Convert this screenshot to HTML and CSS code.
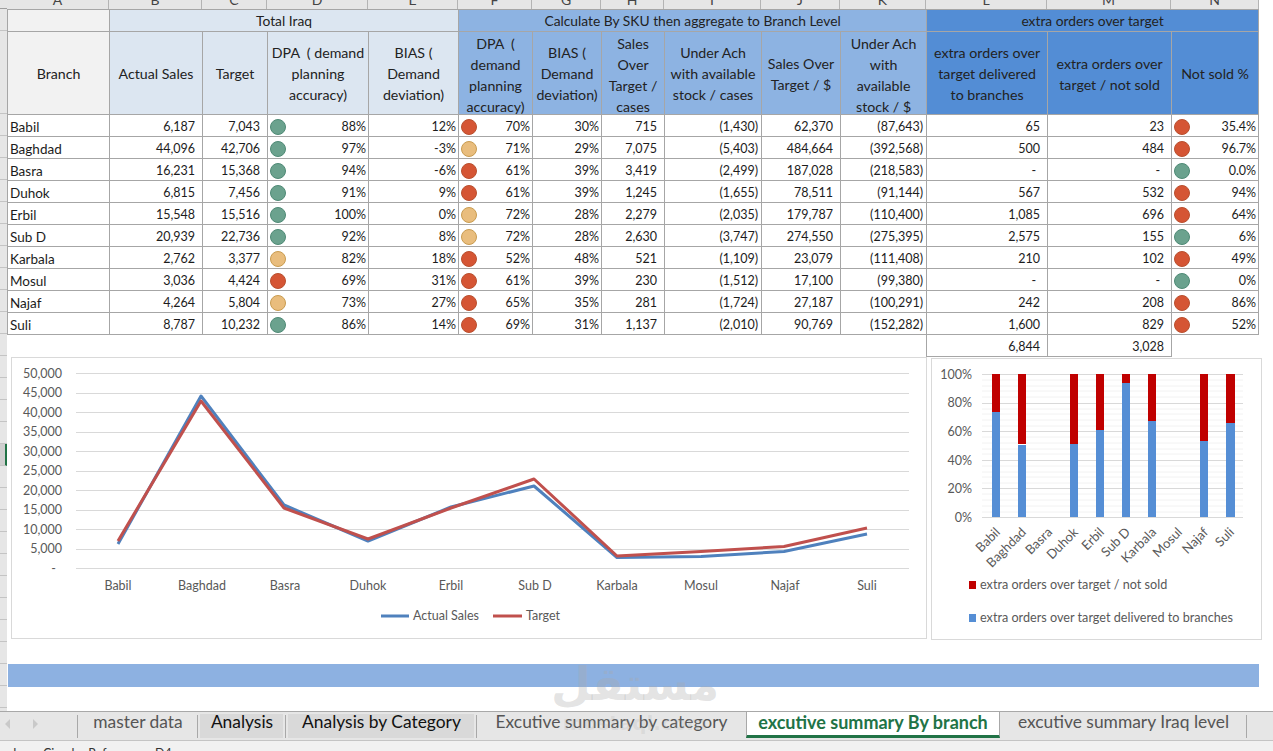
FILE: index.html
```html
<!DOCTYPE html>
<html lang="en">
<head>
<meta charset="utf-8">
<title>excutive summary By branch</title>
<link rel="stylesheet" href="styles.css">
</head>
<body>
<div class="app">
  <div class="sheet">
    <div class="rows">
      <div class="rh rh-top"></div>
      <div class="rh rh-group"></div>
      <div class="rh rh-head"></div>
      <div class="rh-ticks rh-ticks-a"></div>
      <div class="rh rh-sel"></div>
      <div class="rh-ticks rh-ticks-b"></div>
    </div>
    <div class="grid">
      <div class="colhead">
        <span>A</span><span>B</span><span>C</span><span>D</span><span>E</span><span>F</span><span>G</span><span>H</span><span>I</span><span>J</span><span>K</span><span>L</span><span>M</span><span>N</span>
      </div>
      <table class="data">
        <colgroup>
          <col class="c-a"><col class="c-b"><col class="c-c"><col class="c-d"><col class="c-e"><col class="c-f"><col class="c-g"><col class="c-h"><col class="c-i"><col class="c-j"><col class="c-k"><col class="c-l"><col class="c-m"><col class="c-n">
        </colgroup>
        <thead>
          <tr class="group">
            <th class="grey"></th>
            <th class="pale" colspan="4">Total Iraq</th>
            <th class="mid" colspan="6">Calculate By SKU then aggregate to Branch Level</th>
            <th class="deep" colspan="3">extra orders over target</th>
          </tr>
          <tr class="head">
            <th class="grey">Branch</th>
            <th class="pale">Actual Sales</th>
            <th class="pale">Target</th>
            <th class="pale">DPA &nbsp;( demand<br>planning<br>accuracy)</th>
            <th class="pale">BIAS (<br>Demand<br>deviation)</th>
            <th class="mid"><div class="tall">DPA &nbsp;(<br>demand<br>planning<br>accuracy)</div></th>
            <th class="mid">BIAS (<br>Demand<br>deviation)</th>
            <th class="mid"><div class="tall">Sales<br>Over<br>Target /<br>cases</div></th>
            <th class="mid">Under Ach<br>with available<br>stock / cases</th>
            <th class="mid">Sales Over<br>Target / $</th>
            <th class="mid"><div class="tall">Under Ach<br>with<br>available<br>stock / $</div></th>
            <th class="deep">extra orders over<br>target delivered<br>to branches</th>
            <th class="deep">extra orders over<br>target / not sold</th>
            <th class="deep">Not sold %</th>
          </tr>
        </thead>
        <tbody>
          <tr><td class="name">Babil</td><td class="acc">6,187</td><td class="acc">7,043</td><td class="pct"><i class="dot g"></i>88%</td><td class="pct">12%</td><td class="pct"><i class="dot r"></i>70%</td><td class="pct">30%</td><td class="acc">715</td><td class="neg">(1,430)</td><td class="acc">62,370</td><td class="neg">(87,643)</td><td class="acc">65</td><td class="acc">23</td><td class="pct"><i class="dot r"></i>35.4%</td></tr>
          <tr><td class="name">Baghdad</td><td class="acc">44,096</td><td class="acc">42,706</td><td class="pct"><i class="dot g"></i>97%</td><td class="pct">-3%</td><td class="pct"><i class="dot y"></i>71%</td><td class="pct">29%</td><td class="acc">7,075</td><td class="neg">(5,403)</td><td class="acc">484,664</td><td class="neg">(392,568)</td><td class="acc">500</td><td class="acc">484</td><td class="pct"><i class="dot r"></i>96.7%</td></tr>
          <tr><td class="name">Basra</td><td class="acc">16,231</td><td class="acc">15,368</td><td class="pct"><i class="dot g"></i>94%</td><td class="pct">-6%</td><td class="pct"><i class="dot r"></i>61%</td><td class="pct">39%</td><td class="acc">3,419</td><td class="neg">(2,499)</td><td class="acc">187,028</td><td class="neg">(218,583)</td><td class="dash">-</td><td class="dash">-</td><td class="pct"><i class="dot g"></i>0.0%</td></tr>
          <tr><td class="name">Duhok</td><td class="acc">6,815</td><td class="acc">7,456</td><td class="pct"><i class="dot g"></i>91%</td><td class="pct">9%</td><td class="pct"><i class="dot r"></i>61%</td><td class="pct">39%</td><td class="acc">1,245</td><td class="neg">(1,655)</td><td class="acc">78,511</td><td class="neg">(91,144)</td><td class="acc">567</td><td class="acc">532</td><td class="pct"><i class="dot r"></i>94%</td></tr>
          <tr><td class="name">Erbil</td><td class="acc">15,548</td><td class="acc">15,516</td><td class="pct"><i class="dot g"></i>100%</td><td class="pct">0%</td><td class="pct"><i class="dot y"></i>72%</td><td class="pct">28%</td><td class="acc">2,279</td><td class="neg">(2,035)</td><td class="acc">179,787</td><td class="neg">(110,400)</td><td class="acc">1,085</td><td class="acc">696</td><td class="pct"><i class="dot r"></i>64%</td></tr>
          <tr><td class="name">Sub D</td><td class="acc">20,939</td><td class="acc">22,736</td><td class="pct"><i class="dot g"></i>92%</td><td class="pct">8%</td><td class="pct"><i class="dot y"></i>72%</td><td class="pct">28%</td><td class="acc">2,630</td><td class="neg">(3,747)</td><td class="acc">274,550</td><td class="neg">(275,395)</td><td class="acc">2,575</td><td class="acc">155</td><td class="pct"><i class="dot g"></i>6%</td></tr>
          <tr><td class="name">Karbala</td><td class="acc">2,762</td><td class="acc">3,377</td><td class="pct"><i class="dot y"></i>82%</td><td class="pct">18%</td><td class="pct"><i class="dot r"></i>52%</td><td class="pct">48%</td><td class="acc">521</td><td class="neg">(1,109)</td><td class="acc">23,079</td><td class="neg">(111,408)</td><td class="acc">210</td><td class="acc">102</td><td class="pct"><i class="dot r"></i>49%</td></tr>
          <tr><td class="name">Mosul</td><td class="acc">3,036</td><td class="acc">4,424</td><td class="pct"><i class="dot r"></i>69%</td><td class="pct">31%</td><td class="pct"><i class="dot r"></i>61%</td><td class="pct">39%</td><td class="acc">230</td><td class="neg">(1,512)</td><td class="acc">17,100</td><td class="neg">(99,380)</td><td class="dash">-</td><td class="dash">-</td><td class="pct"><i class="dot g"></i>0%</td></tr>
          <tr><td class="name">Najaf</td><td class="acc">4,264</td><td class="acc">5,804</td><td class="pct"><i class="dot y"></i>73%</td><td class="pct">27%</td><td class="pct"><i class="dot r"></i>65%</td><td class="pct">35%</td><td class="acc">281</td><td class="neg">(1,724)</td><td class="acc">27,187</td><td class="neg">(100,291)</td><td class="acc">242</td><td class="acc">208</td><td class="pct"><i class="dot r"></i>86%</td></tr>
          <tr><td class="name">Suli</td><td class="acc">8,787</td><td class="acc">10,232</td><td class="pct"><i class="dot g"></i>86%</td><td class="pct">14%</td><td class="pct"><i class="dot r"></i>69%</td><td class="pct">31%</td><td class="acc">1,137</td><td class="neg">(2,010)</td><td class="acc">90,769</td><td class="neg">(152,282)</td><td class="acc">1,600</td><td class="acc">829</td><td class="pct"><i class="dot r"></i>52%</td></tr>
          <tr class="totals"><td colspan="11" class="blank"></td><td class="acc">6,844</td><td class="acc">3,028</td><td class="blank"></td></tr>
        </tbody>
      </table>
      <div class="charts">
        <div class="card card-line">
          <svg class="chart" width="914" height="280" viewBox="12 358 914 280">
            <g class="grid-major">
              <line x1="76" x2="909" y1="373.5" y2="373.5"/><line x1="76" x2="909" y1="393.5" y2="393.5"/><line x1="76" x2="909" y1="412.5" y2="412.5"/><line x1="76" x2="909" y1="432.5" y2="432.5"/><line x1="76" x2="909" y1="451.5" y2="451.5"/><line x1="76" x2="909" y1="471.5" y2="471.5"/><line x1="76" x2="909" y1="490.5" y2="490.5"/><line x1="76" x2="909" y1="510.5" y2="510.5"/><line x1="76" x2="909" y1="529.5" y2="529.5"/><line x1="76" x2="909" y1="549.5" y2="549.5"/><line x1="76" x2="909" y1="568.5" y2="568.5"/>
            </g>
            <g class="tick-y">
              <text x="62" y="378">50,000</text><text x="62" y="397">45,000</text><text x="62" y="417">40,000</text><text x="62" y="436">35,000</text><text x="62" y="456">30,000</text><text x="62" y="475">25,000</text><text x="62" y="495">20,000</text><text x="62" y="514">15,000</text><text x="62" y="534">10,000</text><text x="62" y="553">5,000</text><text x="56" y="573">-</text>
            </g>
            <g class="tick-x">
              <text x="118" y="590">Babil</text><text x="202" y="590">Baghdad</text><text x="285" y="590">Basra</text><text x="368" y="590">Duhok</text><text x="451" y="590">Erbil</text><text x="535" y="590">Sub D</text><text x="617" y="590">Karbala</text><text x="701" y="590">Mosul</text><text x="785" y="590">Najaf</text><text x="867" y="590">Suli</text>
            </g>
            <polyline class="line line-actual" points="118,544 201,396 284,505 368,541 451,507 534,486 617,557.5 701,556.5 784,551.5 867,534"/>
            <polyline class="line line-target" points="118,541 201,401 284,508 368,539 451,508 534,479 617,556 701,551.5 784,546.5 867,528"/>
            <line class="line line-actual" x1="381" x2="409" y1="616" y2="616"/>
            <line class="line line-target" x1="493" x2="522" y1="616" y2="616"/>
            <text class="legend" x="413" y="620">Actual Sales</text>
            <text class="legend" x="526" y="620">Target</text>
          </svg>
        </div>
        <div class="card card-bars">
          <svg class="chart" width="329" height="280" viewBox="932 359 329 280">
            <g class="grid-minor">
              <line x1="982" x2="1243" y1="380" y2="380"/><line x1="982" x2="1243" y1="386" y2="386"/><line x1="982" x2="1243" y1="391" y2="391"/><line x1="982" x2="1243" y1="397" y2="397"/>
              <line x1="982" x2="1243" y1="409" y2="409"/><line x1="982" x2="1243" y1="414" y2="414"/><line x1="982" x2="1243" y1="420" y2="420"/><line x1="982" x2="1243" y1="426" y2="426"/>
              <line x1="982" x2="1243" y1="437" y2="437"/><line x1="982" x2="1243" y1="443" y2="443"/><line x1="982" x2="1243" y1="449" y2="449"/><line x1="982" x2="1243" y1="454" y2="454"/>
              <line x1="982" x2="1243" y1="466" y2="466"/><line x1="982" x2="1243" y1="472" y2="472"/><line x1="982" x2="1243" y1="477" y2="477"/><line x1="982" x2="1243" y1="483" y2="483"/>
              <line x1="982" x2="1243" y1="494" y2="494"/><line x1="982" x2="1243" y1="500" y2="500"/><line x1="982" x2="1243" y1="506" y2="506"/><line x1="982" x2="1243" y1="512" y2="512"/>
            </g>
            <g class="grid-major">
              <line x1="982" x2="1243" y1="374.5" y2="374.5"/><line x1="982" x2="1243" y1="403.5" y2="403.5"/><line x1="982" x2="1243" y1="431.5" y2="431.5"/><line x1="982" x2="1243" y1="460.5" y2="460.5"/><line x1="982" x2="1243" y1="488.5" y2="488.5"/><line x1="982" x2="1243" y1="517.5" y2="517.5"/>
            </g>
            <g class="bar-red">
              <rect x="992" y="374" width="8" height="38"/><rect x="1018" y="374" width="8" height="70"/><rect x="1070" y="374" width="8" height="70"/><rect x="1096" y="374" width="8" height="56"/><rect x="1122" y="374" width="8" height="9"/><rect x="1148" y="374" width="8" height="47"/><rect x="1200" y="374" width="8" height="67"/><rect x="1226" y="374" width="9" height="49"/>
            </g>
            <g class="bar-blue">
              <rect x="992" y="412" width="8" height="105"/><rect x="1018" y="445" width="8" height="72"/><rect x="1070" y="444" width="8" height="73"/><rect x="1096" y="430" width="8" height="87"/><rect x="1122" y="383" width="8" height="134"/><rect x="1148" y="421" width="8" height="96"/><rect x="1200" y="441" width="8" height="76"/><rect x="1226" y="423" width="9" height="94"/>
            </g>
            <g class="tick-y">
              <text x="972" y="379">100%</text><text x="972" y="407">80%</text><text x="972" y="436">60%</text><text x="972" y="465">40%</text><text x="972" y="493">20%</text><text x="972" y="522">0%</text>
            </g>
            <g class="tick-rot">
              <text transform="translate(1001 533) rotate(-45)">Babil</text>
              <text transform="translate(1027 533) rotate(-45)">Baghdad</text>
              <text transform="translate(1053 533) rotate(-45)">Basra</text>
              <text transform="translate(1079 533) rotate(-45)">Duhok</text>
              <text transform="translate(1105 533) rotate(-45)">Erbil</text>
              <text transform="translate(1131 533) rotate(-45)">Sub D</text>
              <text transform="translate(1157 533) rotate(-45)">Karbala</text>
              <text transform="translate(1183 533) rotate(-45)">Mosul</text>
              <text transform="translate(1209 533) rotate(-45)">Najaf</text>
              <text transform="translate(1235 533) rotate(-45)">Suli</text>
            </g>
            <rect class="swatch-red" x="969" y="581" width="7" height="8"/>
            <text class="legend legend-bars" x="980" y="589">extra orders over target / not sold</text>
            <rect class="swatch-blue" x="969" y="614" width="7" height="8"/>
            <text class="legend legend-bars" x="980" y="622">extra orders over target delivered to branches</text>
          </svg>
        </div>
      </div>
      <div class="band"></div>
    </div>
  </div>
  <div class="tabs">
    <div class="arrows"><i class="arrow arrow-left"></i><i class="arrow arrow-right"></i></div>
    <div class="tab tab-1">master data</div>
    <div class="tab tab-2 shaded">Analysis</div>
    <div class="tab tab-3 shaded">Analysis by Category</div>
    <div class="tab tab-4 nosep">Excutive summary by category</div>
    <div class="tab tab-5 active">excutive summary By branch</div>
    <div class="tab tab-6">excutive summary Iraq level</div>
  </div>
  <div class="status"><span class="status-a">Ready</span><span class="status-b">Circular References: D4</span></div>
  <div class="watermark"><span class="wm-ar" lang="ar" dir="rtl">مستقل</span><span class="wm-en">mostaql.com</span></div>
</div>
</body>
</html>
```
FILE: styles.css
```css
* { box-sizing: border-box; }
html, body { margin: 0; padding: 0; background: #fff; }
body { font-family: Lato, "Liberation Sans", sans-serif; color: #1c1c1c; }

.app { position: relative; width: 1273px; height: 751px; overflow: hidden; display: flex; flex-direction: column; }
.sheet { display: flex; height: 711px; overflow: hidden; }

/* row header strip */
.rows { width: 7px; flex: none; display: flex; flex-direction: column; background: #e6e6e6; }
.rh { flex: none; border-bottom: 1px solid #c4c4c4; }
.rh-top { height: 9px; border-bottom-color: #9f9f9f; }
.rh-group { height: 22px; }
.rh-head { height: 83px; }
.rh-sel { height: 22px; background: #cfcfcf; border-right: 2px solid #217346; }
.rh-ticks { flex: none; background: repeating-linear-gradient(to bottom, #e6e6e6 0, #e6e6e6 21px, #c4c4c4 21px, #c4c4c4 22px); }
.rh-ticks-a { height: 330px; }
.rh-ticks-b { flex: 1; }

/* spreadsheet */
.grid { flex: 1; min-width: 0; display: flex; flex-direction: column; }
.colhead { height: 9px; width: 1252px; overflow: hidden; display: grid; flex: none;
  grid-template-columns: 102px 93px 65px 101px 90px 74px 69px 63px 97px 79px 86px 121px 124px 88px; }
.colhead span { height: 9px; background: #e6e6e6; border-right: 1px solid #b4b4b4; text-align: center; font-size: 14px; line-height: 0; color: #444; padding-top: 0; }

.data { table-layout: fixed; border-collapse: collapse; width: 1252px; flex: none; font-size: 12.5px; }
.c-a { width: 102px; } .c-b { width: 93px; } .c-c { width: 65px; } .c-d { width: 101px; } .c-e { width: 90px; }
.c-f { width: 74px; } .c-g { width: 69px; } .c-h { width: 63px; } .c-i { width: 97px; } .c-j { width: 79px; }
.c-k { width: 86px; } .c-l { width: 121px; } .c-m { width: 124px; } .c-n { width: 87px; }
.data th, .data td { border: 1px solid #a6a6a6; padding: 0; overflow: hidden; white-space: nowrap; }
.data th { font-weight: 400; text-align: center; line-height: 21px; color: #222; font-size: 14.2px; }
.group th { height: 22px; font-size: 13.8px; }
.head th { height: 83px; padding-top: 1px; }
.head th:has(.tall) { padding-top: 0; }
.tall { height: 82px; padding-top: 1px; }
.data td { height: 22px; line-height: 18px; padding-top: 3px; text-align: right; vertical-align: top; }
.grey { background: #f2f2f2; }
.pale { background: #dce6f1; }
.mid { background: #8db3e2; }
.deep { background: #538dd5; }
.data .name { text-align: left; padding-left: 2px; font-size: 13.5px; }
.data .acc { padding-right: 7px; }
.data .neg { padding-right: 3px; }
.data .pct { padding-right: 2px; }
.data .dash { padding-right: 11px; }
.data .blank { border: 0; }

.dot { float: left; width: 16px; height: 16px; margin: 1px 0 0 2px; border-radius: 50%; border: 1px solid; }
.g { background: #6ba28e; border-color: #4f8a76; }
.r { background: #d55534; border-color: #b9502f; }
.y { background: #e9bd7d; border-color: #c99c50; }

/* charts */
.charts { display: flex; gap: 4px; margin: 0 0 0 4px; align-items: flex-start; }
.card { border: 1px solid #d9d9d9; background: #fff; flex: none; }
.card-line { width: 916px; height: 282px; }
.card-bars { width: 331px; height: 282px; margin-top: 1px; }
.chart { display: block; font-family: Lato, "Liberation Sans", sans-serif; }
.grid-major line { stroke: #d9d9d9; stroke-width: 1; }
.grid-minor line { stroke: #f2f2f2; stroke-width: 1; }
.tick-y text { text-anchor: end; font-size: 12.5px; fill: #595959; }
.tick-x text { text-anchor: middle; font-size: 12.5px; fill: #595959; }
.tick-rot text { text-anchor: end; font-size: 13px; fill: #595959; }
.legend { font-size: 12.5px; fill: #595959; }
.legend-bars { font-size: 12.65px; }
.line { fill: none; stroke-width: 3; stroke-linejoin: round; }
.line-actual { stroke: #4f81bd; }
.line-target { stroke: #c0504d; }
.bar-red rect, .swatch-red { fill: #c00000; }
.bar-blue rect, .swatch-blue { fill: #558ed5; }

.band { width: 1251px; height: 23px; margin: 24px 0 0 1px; background: #8db1e1; flex: none; }

/* sheet tabs */
.tabs { flex: none; height: 30px; display: flex; align-items: stretch; padding-bottom: 2px; background: #e6e6e6; border-top: 1px solid #a8a8a8; border-bottom: 1px solid #c4c4c4; font-size: 17.4px; color: #555; }
.arrows { width: 78px; flex: none; display: flex; align-items: center; padding: 0 0 2px 5px; gap: 23px; position: relative; }
.arrows::after { content: ""; position: absolute; right: 0; top: 3px; bottom: 0; width: 1px; background: #a8a8a8; }
.arrow { width: 0; height: 0; border-style: solid; border-width: 5px 0; border-color: transparent; }
.arrow-left { border-right: 5px solid #c9c9c9; }
.arrow-right { border-left: 5px solid #c9c9c9; }
.tab { flex: none; display: flex; align-items: flex-start; justify-content: center; line-height: 20px; position: relative; }
.tab::after { content: ""; position: absolute; right: 0; top: 3px; bottom: 0; width: 1px; background: #a8a8a8; }
.tab.nosep::after, .tab.active::after { display: none; }
.tab-1 { width: 120px; }
.tab-2 { width: 88px; }
.tab-3 { width: 191px; }
.tab-4 { width: 269px; }
.tab-5 { width: 254px; }
.tab-6 { width: 247px; }
.shaded { color: #111; background: linear-gradient(#d9d9d9, #d9d9d9) no-repeat 2px 2px / calc(100% - 5px) 100%; }
.tab.active { margin-top: -1px; background: #fff; color: #217346; font-weight: 700; font-size: 18px; border: 1px solid #a8a8a8; border-bottom: 3px solid #217346; }

/* status bar */
.status { flex: 1; background: #f1f1f1; font-size: 12.5px; color: #333; display: flex; padding: 5px 0 0 0; line-height: 16px; overflow: hidden; }
.status-a { width: 54px; margin-left: -11px; overflow: hidden; }

/* faint site watermark over the sheet */
.watermark { position: absolute; left: 530px; top: 656px; width: 210px; display: flex; flex-direction: column; align-items: center; pointer-events: none; }
.wm-ar { font-family: "DejaVu Sans", sans-serif; font-weight: 700; font-size: 46px; line-height: 56px; color: rgba(170, 170, 170, 0.32); }
.wm-en { font-family: "DejaVu Sans", sans-serif; font-weight: 700; font-size: 20px; line-height: 20px; color: rgba(170, 170, 170, 0.2); margin-top: 1px; }
```
